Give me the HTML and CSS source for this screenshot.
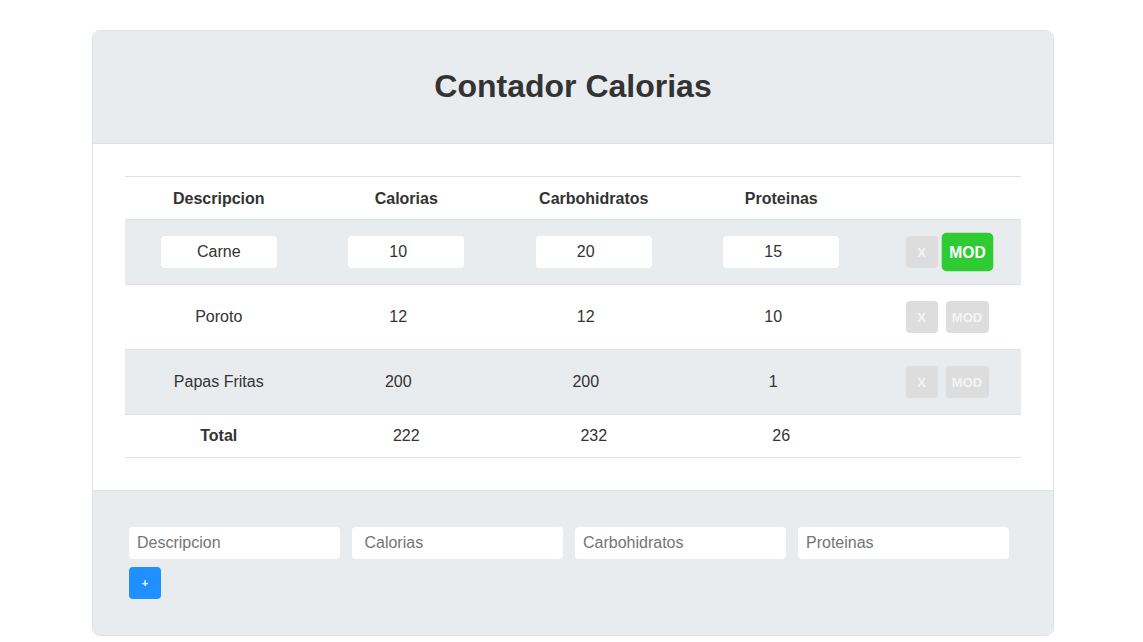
FILE: index.html
```html
<!DOCTYPE html>
<html lang="es">
<head>
<meta charset="utf-8">
<title>Contador Calorias</title>
<link rel="stylesheet" href="styles.css">
</head>
<body>
<div class="card">
  <header class="card-header">
    <h1 class="title">Contador Calorias</h1>
  </header>
  <main class="card-body">
    <table class="food-table">
      <colgroup>
        <col class="col-data"><col class="col-data"><col class="col-data"><col class="col-data"><col class="col-actions">
      </colgroup>
      <thead>
        <tr>
          <th>Descripcion</th>
          <th>Calorias</th>
          <th>Carbohidratos</th>
          <th>Proteinas</th>
          <th></th>
        </tr>
      </thead>
      <tbody>
        <tr class="row-alt">
          <td><input class="cell-input" type="text" value="Carne"></td>
          <td><input class="cell-input num" type="text" value="10"></td>
          <td><input class="cell-input num" type="text" value="20"></td>
          <td><input class="cell-input num" type="text" value="15"></td>
          <td><div class="actions"><button class="btn btn-x">X</button><button class="btn btn-mod active">MOD</button></div></td>
        </tr>
        <tr>
          <td><span class="cell-text">Poroto</span></td>
          <td><span class="cell-text num">12</span></td>
          <td><span class="cell-text num">12</span></td>
          <td><span class="cell-text num">10</span></td>
          <td><div class="actions"><button class="btn btn-x">X</button><button class="btn btn-mod">MOD</button></div></td>
        </tr>
        <tr class="row-alt">
          <td><span class="cell-text">Papas Fritas</span></td>
          <td><span class="cell-text num">200</span></td>
          <td><span class="cell-text num">200</span></td>
          <td><span class="cell-text num">1</span></td>
          <td><div class="actions"><button class="btn btn-x">X</button><button class="btn btn-mod">MOD</button></div></td>
        </tr>
      </tbody>
      <tfoot>
        <tr class="total-row">
          <th>Total</th>
          <td>222</td>
          <td>232</td>
          <td>26</td>
          <td></td>
        </tr>
      </tfoot>
    </table>
  </main>
  <footer class="card-footer">
    <div class="form-row">
      <input class="form-input" type="text" placeholder="Descripcion">
      <input class="form-input" type="text" placeholder=" Calorias">
      <input class="form-input" type="text" placeholder="Carbohidratos">
      <input class="form-input" type="text" placeholder="Proteinas">
    </div>
    <button class="btn-add">+</button>
  </footer>
</div>
</body>
</html>
```

FILE: styles.css
```css
* { box-sizing: border-box; }

html, body {
  margin: 0;
  padding: 0;
  background: #ffffff;
}

body {
  font-family: "Liberation Sans", Arial, sans-serif;
  color: #333333;
  font-size: 16px;
}

.card {
  width: 962px;
  margin: 30px 0 0 92px;
  border: 1px solid #dee2e6;
  border-radius: 8px;
  overflow: hidden;
}

.card-header {
  background: #e9ecef;
  height: 113px;
  border-bottom: 1px solid #dee2e6;
  display: flex;
  align-items: center;
  justify-content: center;
}

.title {
  margin: 0;
  font-size: 32px;
  font-weight: bold;
  color: #333333;
  position: relative;
  top: -1px;
}

.card-body {
  background: #ffffff;
  padding: 32px 32px 32px 32px;
}

.food-table {
  width: 896px;
  border-collapse: collapse;
  table-layout: fixed;
}

.col-data { width: 187.5px; }
.col-actions { width: 146px; }

.food-table th,
.food-table td {
  text-align: center;
  vertical-align: middle;
  border-top: 1px solid #dee2e6;
  padding: 0;
}

.food-table thead th {
  height: 43px;
  font-weight: bold;
  padding-top: 1px;
}

.food-table tbody td {
  height: 65px;
}

.row-alt td {
  background: #e9ecef;
}

.cell-input {
  display: block;
  margin: 0 auto;
  width: 116px;
  height: 32px;
  border: none;
  border-radius: 4px;
  background: #ffffff;
  font-family: "Liberation Sans", Arial, sans-serif;
  font-size: 16px;
  color: #333333;
  text-align: center;
  padding: 0;
  outline: none;
}

.cell-input.num {
  padding-right: 16px;
}

.cell-text {
  display: block;
  margin: 0 auto;
  width: 116px;
  line-height: 32px;
  text-align: center;
}

.cell-text.num {
  padding-right: 16px;
}

.actions {
  display: flex;
  justify-content: center;
  align-items: center;
  gap: 8px;
  padding-right: 2px;
}

.btn {
  height: 32px;
  border: none;
  border-radius: 4px;
  background: #dddddd;
  color: #f4f4f4;
  font-family: "Liberation Sans", Arial, sans-serif;
  font-weight: bold;
  font-size: 13px;
  padding: 0;
  cursor: pointer;
}

.btn-x {
  width: 32px;
}

.btn-mod {
  width: 43px;
}

.btn-mod.active {
  background: #2ecc32;
  color: #ffffff;
  transform: scale(1.2);
}

.total-row th,
.total-row td {
  height: 43px;
  border-bottom: 1px solid #dee2e6;
}

.total-row th {
  font-weight: bold;
}

.card-footer {
  background: #e9ecef;
  border-top: 1px solid #dee2e6;
  padding: 36px 36px 36px 36px;
}

.form-row {
  display: flex;
  gap: 12px;
}

.form-input {
  width: 211px;
  height: 32px;
  border: none;
  border-radius: 4px;
  background: #ffffff;
  padding: 0 8px;
  font-family: "Liberation Sans", Arial, sans-serif;
  font-size: 16px;
  color: #333333;
  outline: none;
}

.form-input::placeholder {
  color: #757575;
  opacity: 1;
}

.btn-add {
  display: block;
  margin-top: 8px;
  width: 32px;
  height: 32px;
  border: none;
  border-radius: 4px;
  background: #1e90ff;
  color: #ffffff;
  font-family: "Liberation Sans", Arial, sans-serif;
  font-weight: bold;
  font-size: 11px;
  padding: 0;
}
```
